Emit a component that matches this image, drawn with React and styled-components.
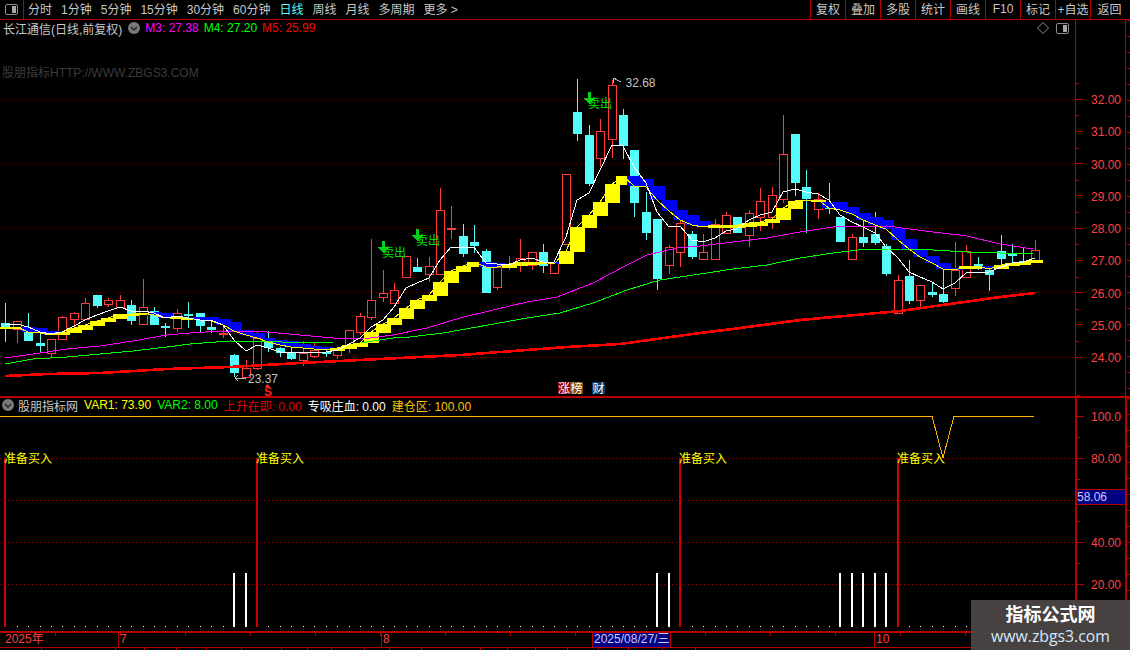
import React from 'react'
import styled, { createGlobalStyle } from 'styled-components'

const LINE = '#b80000'
const AXIS_TEXT = '#ff4040'
const PITCH = 11.44
const cx = (i) => Math.round(5.3 + i * PITCH)

const GlobalStyle = createGlobalStyle`
  html, body {
    margin: 0;
    padding: 0;
    background: #000;
    font-family: "Liberation Sans", "Noto Sans CJK SC", sans-serif;
    font-size: 12px;
  }
`

// [kind, high, bodyTop, bodyBottom, low]
const candles = [
  ['d', 303, 323, 329, 342], ['u', 321, 321, 329, 343], ['d', 313, 332, 341, 341], ['d', 333, 343, 346, 353],
  ['u', 339, 339, 353, 358], ['u', 316, 317, 339, 339], ['u', 312, 313, 319, 327], ['u', 298, 303, 319, 319],
  ['d', 295, 295, 306, 308], ['u', 298, 300, 304, 307], ['u', 295, 300, 307, 308], ['d', 300, 305, 321, 325],
  ['u', 279, 307, 324, 324], ['d', 307, 311, 325, 325], ['d', 323, 326, 326, 337], ['u', 309, 313, 328, 332],
  ['d', 302, 314, 314, 328], ['d', 313, 313, 326, 332], ['d', 320, 327, 330, 333], ['u', 327, 333, 333, 338],
  ['d', 354, 355, 373, 377], ['u', 360, 368, 377, 377], ['u', 332, 338, 368, 370], ['d', 331, 341, 348, 352],
  ['d', 347, 348, 353, 357], ['d', 348, 353, 359, 360], ['u', 341, 353, 360, 366], ['u', 343, 350, 356, 358],
  ['d', 348, 352, 352, 357], ['u', 349, 350, 355, 359], ['u', 330, 330, 348, 353], ['u', 313, 316, 332, 335],
  ['u', 239, 300, 317, 320], ['u', 270, 293, 297, 302], ['u', 283, 290, 303, 303], ['u', 256, 256, 277, 277],
  ['d', 258, 267, 272, 272], ['u', 257, 266, 274, 282], ['u', 188, 210, 274, 274], ['u', 206, 228, 228, 239],
  ['d', 224, 236, 254, 257], ['d', 225, 242, 246, 253], ['d', 249, 251, 293, 293], ['u', 263, 267, 287, 290],
  ['u', 256, 264, 264, 270], ['u', 239, 258, 264, 272], ['u', 252, 252, 265, 270], ['d', 244, 252, 266, 273],
  ['u', 263, 263, 273, 273], ['u', 174, 174, 244, 244], ['d', 79, 112, 134, 141], ['d', 125, 135, 184, 186],
  ['u', 119, 131, 158, 167], ['u', 80, 85, 139, 158], ['d', 109, 115, 146, 159], ['d', 150, 150, 203, 217],
  ['d', 192, 212, 233, 240], ['d', 219, 219, 279, 290], ['u', 245, 247, 265, 274], ['u', 217, 223, 252, 267],
  ['d', 231, 234, 257, 259], ['u', 234, 252, 259, 259], ['u', 219, 224, 259, 259], ['u', 212, 215, 233, 233],
  ['d', 217, 217, 233, 233], ['u', 210, 213, 235, 247], ['u', 188, 201, 217, 231], ['u', 187, 195, 217, 229],
  ['u', 115, 154, 199, 203], ['d', 134, 134, 183, 196], ['d', 170, 187, 199, 233], ['u', 193, 199, 209, 219],
  ['d', 183, 203, 209, 214], ['d', 217, 217, 242, 242], ['u', 234, 237, 259, 259], ['d', 220, 237, 243, 247],
  ['d', 212, 234, 243, 245], ['d', 244, 246, 274, 276], ['u', 275, 280, 313, 313], ['d', 260, 276, 301, 304],
  ['u', 285, 285, 300, 309], ['d', 283, 292, 295, 297], ['d', 269, 294, 302, 303], ['u', 242, 270, 288, 296],
  ['u', 245, 251, 277, 277], ['d', 257, 264, 266, 270], ['d', 267, 270, 275, 291], ['d', 235, 251, 259, 265],
  ['d', 244, 254, 254, 263], ['d', 248, 261, 261, 263], ['u', 240, 250, 262, 262],
]

// [top, bottom, rising] per bar; the thin line runs on its far edge
const cloud = [
  [327, 329, 1], [327, 329, 1], [327, 332, 0], [328, 333, 0], [331, 335, 0], [332, 335, 1], [328, 333, 1],
  [325, 330, 1], [321, 326, 1], [318, 322, 1], [314, 319, 1], [314, 316, 1], [313, 315, 1], [312, 315, 0],
  [313, 318, 0], [317, 319, 1], [318, 320, 1], [317, 320, 0], [317, 321, 0], [319, 325, 0], [322, 331, 0],
  [330, 335, 0], [333, 338, 0], [338, 342, 0], [340, 345, 0], [341, 347, 0], [344, 348, 0], [346, 349, 0],
  [347, 350, 0], [348, 351, 1], [345, 349, 1], [343, 347, 1], [332, 343, 1], [324, 333, 1], [318, 325, 1],
  [308, 319, 1], [300, 309, 1], [295, 301, 1], [282, 296, 1], [271, 283, 1], [266, 272, 1], [262, 267, 1],
  [262, 267, 0], [263, 267, 0], [264, 268, 1], [262, 266, 1], [262, 265, 1], [262, 264, 1], [262, 264, 0],
  [251, 264, 1], [227, 252, 1], [215, 228, 1], [202, 216, 1], [184, 203, 1], [176, 185, 1], [176, 186, 0],
  [179, 187, 0], [186, 200, 0], [200, 211, 0], [210, 220, 0], [215, 225, 0], [221, 227, 0], [225, 228, 1],
  [225, 228, 1], [225, 228, 1], [223, 227, 1], [222, 226, 1], [219, 223, 1], [208, 220, 1], [201, 209, 1],
  [200, 201, 1], [200, 202, 1], [202, 208, 0], [202, 210, 0], [207, 214, 0], [213, 220, 0], [217, 225, 0],
  [220, 229, 0], [228, 240, 0], [239, 249, 0], [249, 257, 0], [256, 263, 0], [263, 269, 0], [268, 270, 0],
  [266, 269, 1], [266, 269, 1], [266, 269, 0], [265, 269, 1], [263, 266, 1], [262, 265, 1], [260, 263, 1],
]

const m1 = [
  324, 324, 327, 332, 334, 332, 326, 320, 315, 311, 307, 311, 311, 313, 318, 316, 318, 320, 320, 325, 340, 351, 345,
  348, 352, 352, 352, 352, 352, 350, 344, 338, 327, 320, 307, 288, 283, 278, 260, 247, 248, 247, 263, 264, 265, 260,
  258, 262, 262, 237, 200, 193, 170, 145, 146, 167, 183, 212, 227, 226, 240, 242, 238, 231, 229, 220, 215, 212, 192,
  189, 192, 194, 200, 215, 222, 227, 233, 247, 258, 272, 277, 282, 289, 283, 273, 272, 272, 267, 263, 262, 258,
]

const m3 = '5,358 33,354 67,349 100,346 133,341 167,335 190,333 220,331 267,332 300,335 333,338 363,339 393,335 427,328 460,318 493,310 527,302 557,297 593,283 627,265 647,255 677,248 700,246 733,242 767,238 800,232 833,227 887,226 933,232 967,236 1000,244 1033,249'
const m4 = '5,364 33,359 67,357 100,354 133,351 167,347 190,344 230,341 333,343 360,343 393,338 410,337 443,333 477,327 527,318 560,313 593,303 627,290 660,280 700,274 733,269 767,265 800,258 833,253 867,249 900,249 933,250 967,252 1000,253 1033,254'
const m5 = '5,376 47,374 100,373 167,369 230,367 300,363 360,360 460,355 567,347 620,344 700,333 725,330 800,320 900,311 1000,297 1035,293'

const toolbarLeft = ['分时', '1分钟', '5分钟', '15分钟', '30分钟', '60分钟', '日线', '周线', '月线', '多周期', '更多 >']
const toolbarRight = ['复权', '叠加', '多股', '统计', '画线', 'F10', '标记', '+自选', '返回']
const prices = ['32.00', '31.00', '30.00', '29.00', '28.00', '27.00', '26.00', '25.00', '24.00']
const percents = ['100.0', '80.00', '', '40.00', '20.00']
const tabWidths = [42, 74, 29, 32, 30, 35, 40, 26, 24, 33, 25, 32, 59, 27, 28, 32, 31, 30, 34, 33]

const Screen = styled.div`
  position: relative;
  width: 1130px;
  height: 650px;
  overflow: hidden;
  background: #000;
  display: flex;
  flex-direction: column;
`

const Toolbar = styled.div`
  height: 19px;
  border-bottom: 1px solid ${LINE};
  display: flex;
  align-items: stretch;
  padding-right: 2px;
  color: #c8c8c8;
`

const PanelToggle = styled.div`
  width: 23px;
  border-right: 1px solid ${LINE};
  display: flex;
  align-items: center;
  justify-content: center;
`

const NavItems = styled.div`
  display: flex;
  align-items: center;
  gap: 9px;
  margin-left: 4px;
  padding-bottom: 2px;
`

const NavItem = styled.span`
  color: ${(p) => (p.$active ? '#54fcfc' : '#c8c8c8')};
  white-space: nowrap;
`

const ActionGroup = styled.div`
  margin-left: auto;
  display: flex;
`

const ActionButton = styled.div`
  width: ${(p) => (p.$last ? 38 : 35)}px;
  box-sizing: border-box;
  padding-bottom: 2px;
  border-left: 1px solid ${LINE};
  display: flex;
  align-items: center;
  justify-content: center;
  white-space: nowrap;
`

const PricePane = styled.div`
  height: 376px;
  display: flex;
`

const IndicatorPane = styled.div`
  height: 232px;
  display: flex;
  border-top: 2px solid ${LINE};
`

const ChartColumn = styled.div`
  flex: 1;
  min-width: 0;
  display: flex;
  flex-direction: column;
`

const InfoRow = styled.div`
  height: 18px;
  box-sizing: border-box;
  display: flex;
  align-items: center;
  padding: 0 6px 2px 3px;
  white-space: nowrap;
  color: #c8c8c8;
`

const IndicatorInfo = styled(InfoRow)`
  height: 17px;
  padding-left: 2px;
  padding-bottom: 3px;
`

const InfoValue = styled.span`
  color: ${(p) => p.$color};
  margin-left: ${(p) => p.$gap ?? 6}px;
`

const CornerIcons = styled.div`
  margin-left: auto;
  display: flex;
  align-items: center;
  gap: 7px;
`

const Watermark = styled.div`
  height: 40px;
  box-sizing: border-box;
  padding: 28px 0 0 2px;
  line-height: 14px;
  color: #3c3c3c;
  white-space: nowrap;
`

const ChartSvg = styled.svg`
  display: block;
  flex: 1;
  min-height: 0;
  width: 100%;
  shape-rendering: crispEdges;
  overflow: visible;

  text {
    font-family: "Liberation Sans", "Noto Sans CJK SC", sans-serif;
    font-size: 12px;
  }
`

const AxisColumn = styled.div`
  position: relative;
  width: 50px;
  box-sizing: border-box;
  border-left: ${(p) => p.$border}px solid ${LINE};
`

const Scale = styled.div`
  margin-top: ${(p) => p.$offset}px;
`

const ScaleRow = styled.div`
  position: relative;
  height: ${(p) => p.$height}px;
  display: flex;
  align-items: center;
  color: ${AXIS_TEXT};

  &::after {
    content: '';
    position: absolute;
    left: 0;
    top: 0;
    width: 3px;
    height: 1px;
    background: ${LINE};
  }
`

const ScaleLabel = styled.span`
  margin-top: 2px;
`

const Tick = styled.i`
  width: 7px;
  height: 1px;
  margin-right: ${(p) => p.$space}px;
  background: ${LINE};
`

const CursorValue = styled.div`
  position: absolute;
  left: 0;
  top: 91px;
  width: 48px;
  height: 16px;
  box-sizing: border-box;
  border-top: 1px solid ${LINE};
  border-bottom: 1px solid ${LINE};
  background: #000080;
  color: #c8c8ff;
  line-height: 14px;
`

const EdgeStrip = styled.div`
  width: 5px;
  box-sizing: border-box;
  border-left: ${(p) => p.$border}px solid ${LINE};
  background: repeating-linear-gradient(to bottom, ${LINE} 0 1px, transparent 1px 16px) right / 3px 100% no-repeat;
`

const TimeAxis = styled.div`
  height: 16px;
  box-sizing: border-box;
  margin-top: 1px;
  border-top: 2px solid ${LINE};
  display: flex;
  line-height: 13px;
  color: ${AXIS_TEXT};
  background: repeating-linear-gradient(to right, ${LINE} 0 1px, transparent 1px 65px) 55px 0 / 100% 3px no-repeat;
`

const TimeCell = styled.div`
  width: ${(p) => p.$width}px;
  box-sizing: border-box;
  padding-left: ${(p) => p.$pad ?? 1}px;
  border-left: ${(p) => (p.$plain ? 0 : 1)}px solid ${LINE};
  white-space: nowrap;
`

const DateCell = styled(TimeCell)`
  background: #000080;
  color: #c8c8ff;
  border-right: 1px solid ${LINE};
`

const Tabs = styled.div`
  flex: 1;
  border-top: 1px solid ${LINE};
  display: flex;
`

const Tab = styled.div`
  width: ${(p) => p.$width}px;
  box-sizing: border-box;
  border-right: 1px solid ${LINE};
`

const Badge = styled.div`
  position: absolute;
  right: 0;
  bottom: 0;
  width: 159px;
  height: 50px;
  background: #474241;
  display: flex;
  flex-direction: column;
  align-items: center;
  justify-content: center;
  line-height: 21px;
`

const BadgeTitle = styled.div`
  margin-top: 1px;
  color: #fff;
  font-weight: 700;
  font-size: 18px;
`

const BadgeUrl = styled.div`
  color: #d5e8fb;
  font-family: "Open Sans", sans-serif;
  font-size: 15.8px;
`

const Toggle = () => (
  <svg width="13" height="11" viewBox="0 0 13 11">
    <rect x="0.5" y="0.5" width="12" height="10" rx="1.5" fill="none" stroke="#8c8c8c" />
    <rect x="7" y="2" width="4" height="7" fill="#a8a8a8" />
  </svg>
)

const RoundChevron = ({ margin }) => (
  <svg width="12" height="12" viewBox="0 0 12 12" style={{ margin }}>
    <circle cx="6" cy="6" r="6" fill="#7a7a7a" />
    <path d="M3 5l3 3 3-3" fill="none" stroke="#222" strokeWidth="1.4" />
  </svg>
)

const Candle = ({ i, data }) => {
  const [kind, high, top, bottom, low] = data
  const x = cx(i)
  const color = kind === 'u' ? '#ff3c3c' : '#54fcfc'
  return (
    <g>
      <line x1={x + 0.5} x2={x + 0.5} y1={high} y2={top} stroke={color} />
      <line x1={x + 0.5} x2={x + 0.5} y1={bottom} y2={low} stroke={color} />
      {top === bottom ? (
        <rect x={x - 4} y={top} width="9" height="2" fill={color} />
      ) : kind === 'u' ? (
        <rect x={x - 3.5} y={top + 0.5} width="8" height={bottom - top} fill="#000" stroke={color} />
      ) : (
        <rect x={x - 4} y={top} width="9" height={bottom - top} fill={color} />
      )}
    </g>
  )
}

const SellMark = ({ x, y }) => (
  <g>
    <rect x={x - 1} y={y} width="3" height="7" fill="#00d020" />
    <path d={`M${x - 5} ${y + 6}h11l-5.5 6z`} fill="#00d020" />
    <text x={x - 1} y={y + 16} fill="#00e000">卖出</text>
  </g>
)

const PriceChart = () => (
  <ChartSvg viewBox="0 78 1075 318" preserveAspectRatio="none">
    {[99, 163, 228, 292, 357].map((y) => (
      <line key={y} x1="0" x2="1075" y1={y + 0.5} y2={y + 0.5} stroke="#7a0000" strokeDasharray="1 3" />
    ))}
    {candles.map((c, i) => <Candle key={i} i={i} data={c} />)}
    {cloud.map(([top, bottom, rising], i) => (
      <rect key={i} x={cx(i) - 7} y={top} width="15" height={bottom - top} fill={rising ? '#ffff00' : '#0000ff'} />
    ))}
    <polyline points={m3} fill="none" stroke="#ff00ff" />
    <polyline points={m4} fill="none" stroke="#00ff00" />
    <polyline points={m5} fill="none" stroke="#ff0000" strokeWidth="2.6" />
    <polyline
      points={cloud.map(([top, bottom, rising], i) => `${cx(i)},${rising ? top : bottom}`).join(' ')}
      fill="none"
      stroke="#ffff00"
    />
    <polyline points={m1.map((y, i) => `${cx(i)},${y}`).join(' ')} fill="none" stroke="#ffffff" />

    <SellMark x={383} y={241} />
    <SellMark x={417} y={229} />
    <SellMark x={589} y={92} />

    <path d="M621 82l-8-4M613 78v5M613 78h3" fill="none" stroke="#c0c0c0" />
    <text x="625.5" y="87" fill="#c0c0c0">32.68</text>
    <path d="M246 378h-11M235 378l3-3M235 378l3 3" fill="none" stroke="#c0c0c0" />
    <text x="248" y="383" fill="#c0c0c0">23.37</text>

    <path d="M267 384l-3 3h6z" fill="#ff2020" />
    <text x="264" y="396" fill="#ff2020" fontWeight="700">S</text>

    <rect x="558" y="382" width="12" height="12" fill="#8c0000" />
    <text x="558" y="392.5" fill="#fff">涨</text>
    <rect x="570" y="382" width="13" height="12" fill="#8c4a00" />
    <text x="570.5" y="392.5" fill="#fff">榜</text>
    <rect x="592" y="382" width="13" height="12" fill="#003a6c" />
    <text x="592.5" y="392.5" fill="#fff">财</text>
  </ChartSvg>
)

const IndicatorChart = () => (
  <ChartSvg viewBox="0 415 1075 215" preserveAspectRatio="none">
    {[458, 500, 542, 584].map((y) => (
      <line key={y} x1="0" x2="1075" y1={y + 0.5} y2={y + 0.5} stroke="#a00000" strokeDasharray="1 3" />
    ))}
    {candles.map((_, i) => <rect key={i} x={cx(i)} y="626" width="1" height="1" fill="#fff" />)}
    {[20, 21, 57, 58, 73, 74, 75, 76, 77].map((i) => (
      <rect key={i} x={cx(i) - 1} y="573" width="2" height="54" fill="#fff" />
    ))}
    {[0, 22, 59, 78].map((i) => (
      <g key={i}>
        <rect x={cx(i) - 1} y="458" width="2" height="169" fill="#d00000" />
        <text x={cx(i) - 1} y="463" fill="#ffff00">准备买入</text>
      </g>
    ))}
    <polyline points="0,416 932,416 943,458 954,416 1034,416" fill="none" stroke="#ffb000" />
  </ChartSvg>
)

function App() {
  return (
    <Screen>
      <GlobalStyle />
      <Toolbar>
        <PanelToggle><Toggle /></PanelToggle>
        <NavItems>
          {toolbarLeft.map((t) => <NavItem key={t} $active={t === '日线'}>{t}</NavItem>)}
        </NavItems>
        <ActionGroup>
          {toolbarRight.map((t) => <ActionButton key={t} $last={t === '返回'}>{t}</ActionButton>)}
        </ActionGroup>
      </Toolbar>

      <PricePane>
        <ChartColumn>
          <InfoRow>
            长江通信(日线,前复权)
            <RoundChevron margin="0 0 0 6px" />
            <InfoValue $color="#ff00ff" $gap={5}>M3: 27.38</InfoValue>
            <InfoValue $color="#00ff00" $gap={5}>M4: 27.20</InfoValue>
            <InfoValue $color="#ff0000" $gap={5}>M5: 25.99</InfoValue>
            <CornerIcons>
              <svg width="12" height="12" viewBox="0 0 12 12">
                <path d="M6 .5L11.5 6 6 11.5.5 6z" fill="none" stroke="#8c8c8c" />
              </svg>
              <Toggle />
            </CornerIcons>
          </InfoRow>
          <Watermark>股朋指标HTTP://WWW.ZBGS3.COM</Watermark>
          <PriceChart />
        </ChartColumn>
        <AxisColumn $border={1}>
          <Scale $offset={63}>
            {prices.map((p) => (
              <ScaleRow key={p} $height={32.25}>
                <Tick $space={8} />
                <ScaleLabel>{p}</ScaleLabel>
              </ScaleRow>
            ))}
          </Scale>
        </AxisColumn>
        <EdgeStrip $border={1} />
      </PricePane>

      <IndicatorPane>
        <ChartColumn>
          <IndicatorInfo>
            <RoundChevron margin="0 4px 0 0" />
            股朋指标网
            <InfoValue $color="#ffff00">VAR1: 73.90</InfoValue>
            <InfoValue $color="#00ff00">VAR2: 8.00</InfoValue>
            <InfoValue $color="#e00000">上升在即: 0.00</InfoValue>
            <InfoValue $color="#ffffff">专吸庄血: 0.00</InfoValue>
            <InfoValue $color="#ffc000">建仓区: 100.00</InfoValue>
          </IndicatorInfo>
          <IndicatorChart />
        </ChartColumn>
        <AxisColumn $border={2}>
          <Scale $offset={-3}>
            {percents.map((p, i) => (
              <ScaleRow key={i} $height={42}>
                <Tick $space={7} />
                <ScaleLabel>{p}</ScaleLabel>
              </ScaleRow>
            ))}
          </Scale>
          <CursorValue>58.06</CursorValue>
        </AxisColumn>
        <EdgeStrip $border={2} />
      </IndicatorPane>

      <TimeAxis>
        <TimeCell $width={118} $pad={5} $plain>2025年</TimeCell>
        <TimeCell $width={263}>7</TimeCell>
        <TimeCell $width={211}>8</TimeCell>
        <DateCell $width={79}>2025/08/27/三</DateCell>
        <TimeCell $width={203} $plain />
        <TimeCell $width={100}>10</TimeCell>
      </TimeAxis>
      <Tabs>
        {tabWidths.map((w, i) => <Tab key={i} $width={w} />)}
      </Tabs>

      <Badge>
        <BadgeTitle>指标公式网</BadgeTitle>
        <BadgeUrl>www.zbgs3.com</BadgeUrl>
      </Badge>
    </Screen>
  )
}

export default App
